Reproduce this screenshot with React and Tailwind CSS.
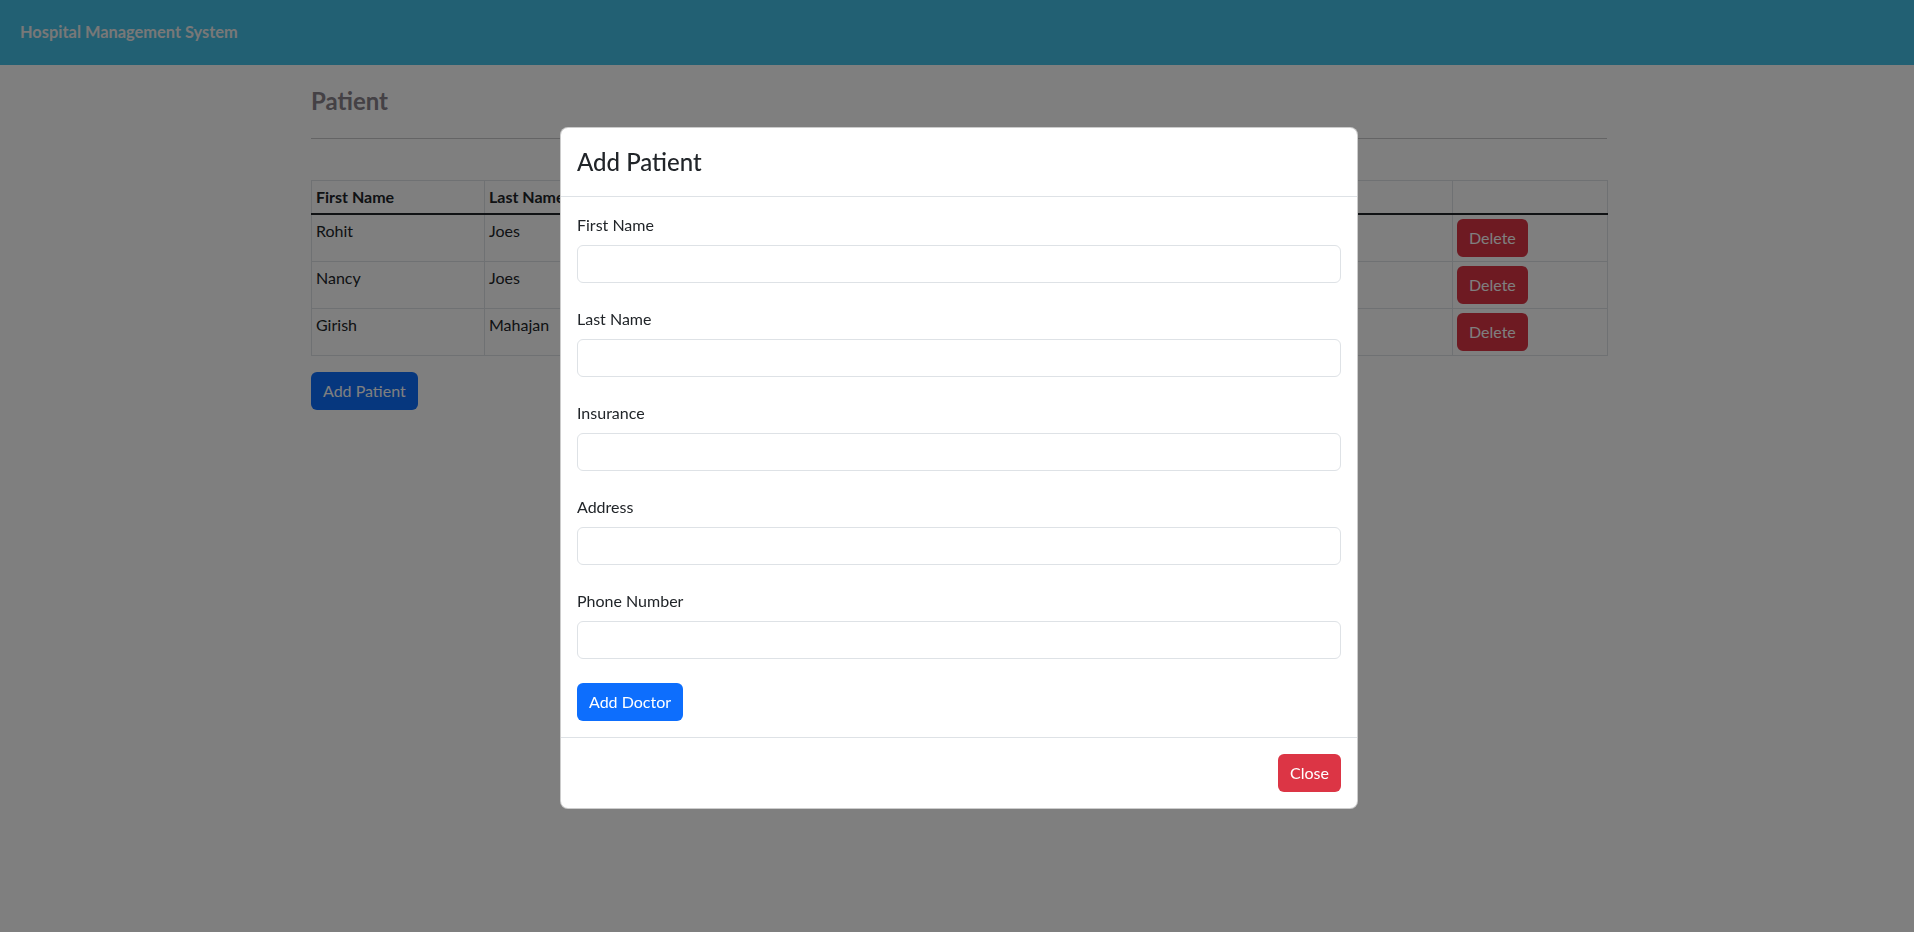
const patients = [
  { id: 1, firstName: "Rohit", lastName: "Joes", insurance: "LIC", address: "Pune", phone: "9876543210" },
  { id: 2, firstName: "Nancy", lastName: "Joes", insurance: "HDFC", address: "Mumbai", phone: "9123456780" },
  { id: 3, firstName: "Girish", lastName: "Mahajan", insurance: "Star", address: "Nashik", phone: "9988776655" },
];

const fields = ["First Name", "Last Name", "Insurance", "Address", "Phone Number"];

export default function App() {
  return (
    <div className="relative min-h-screen bg-white font-['Lato',sans-serif] text-[#212529]">
      {/* Navbar */}
      <nav className="flex h-[65px] items-center bg-[#44c0e6] pl-[20px]">
        <span className="text-[16.4px] font-bold text-[#f0f0f0]">Hospital Management System</span>
      </nav>

      {/* Page content */}
      <div className="pl-1">
        <div className="mx-auto w-[1296px] pt-[21px]">
          <h4 className="text-[24px] font-bold leading-[29px] text-[#88828a]">Patient</h4>
          <hr className="mt-[23px] border-t border-[#c8c9ca]" />

          <table className="mt-[41px] w-full table-fixed border-collapse border border-[#dee2e6] text-[16px]">
            <thead>
              <tr>
                <th className="w-[173px] border border-b-2 border-[#dee2e6] border-b-[#212529] p-1 text-left font-bold leading-6">First Name</th>
                <th className="w-[190px] border border-b-2 border-[#dee2e6] border-b-[#212529] p-1 text-left font-bold leading-6">Last Name</th>
                <th className="w-[220px] border border-b-2 border-[#dee2e6] border-b-[#212529] p-1 text-left font-bold leading-6">Insurance</th>
                <th className="w-[340px] border border-b-2 border-[#dee2e6] border-b-[#212529] p-1 text-left font-bold leading-6">Address</th>
                <th className="w-[218px] border border-b-2 border-[#dee2e6] border-b-[#212529] p-1 text-left font-bold leading-6">Phone Number</th>
                <th className="w-[155px] border border-b-2 border-[#dee2e6] border-b-[#212529] p-1"></th>
              </tr>
            </thead>
            <tbody>
              {patients.map((p) => (
                <tr key={p.id}>
                  <td className="border border-[#dee2e6] p-1 align-top leading-6">{p.firstName}</td>
                  <td className="border border-[#dee2e6] p-1 align-top leading-6">{p.lastName}</td>
                  <td className="border border-[#dee2e6] p-1 align-top leading-6">{p.insurance}</td>
                  <td className="border border-[#dee2e6] p-1 align-top leading-6">{p.address}</td>
                  <td className="border border-[#dee2e6] p-1 align-top leading-6">{p.phone}</td>
                  <td className="border border-[#dee2e6] p-1 align-top">
                    <button className="block h-[38px] rounded-md bg-[#dc3545] px-3 text-[16px] text-white">Delete</button>
                  </td>
                </tr>
              ))}
            </tbody>
          </table>

          <button className="mt-4 h-[38px] rounded-md bg-[#0d6efd] px-3 text-[16px] text-white">Add Patient</button>
        </div>
      </div>

      {/* Backdrop */}
      <div className="fixed inset-0 bg-black/50" />

      {/* Modal */}
      <div className="fixed inset-0 flex items-center justify-center pl-1 pt-[3px]">
        <div className="w-[798px] rounded-lg border border-black/20 bg-white">
          <div className="border-b border-[#dee2e6] p-4">
            <h4 className="text-[24px] font-medium leading-9">Add Patient</h4>
          </div>
          <div className="p-4">
            {fields.map((f) => (
              <div key={f} className="mb-6">
                <label className="mb-2 block text-[16px] leading-6">{f}</label>
                <input className="block h-[38px] w-full rounded-md border border-[#dee2e6] px-3 outline-none" />
              </div>
            ))}
            <button className="h-[38px] rounded-md bg-[#0d6efd] px-3 text-[16px] text-white">Add Doctor</button>
          </div>
          <div className="flex justify-end border-t border-[#dee2e6] p-3">
            <button className="m-1 h-[38px] rounded-md bg-[#dc3545] px-3 text-[16px] text-white">Close</button>
          </div>
        </div>
      </div>
    </div>
  );
}
